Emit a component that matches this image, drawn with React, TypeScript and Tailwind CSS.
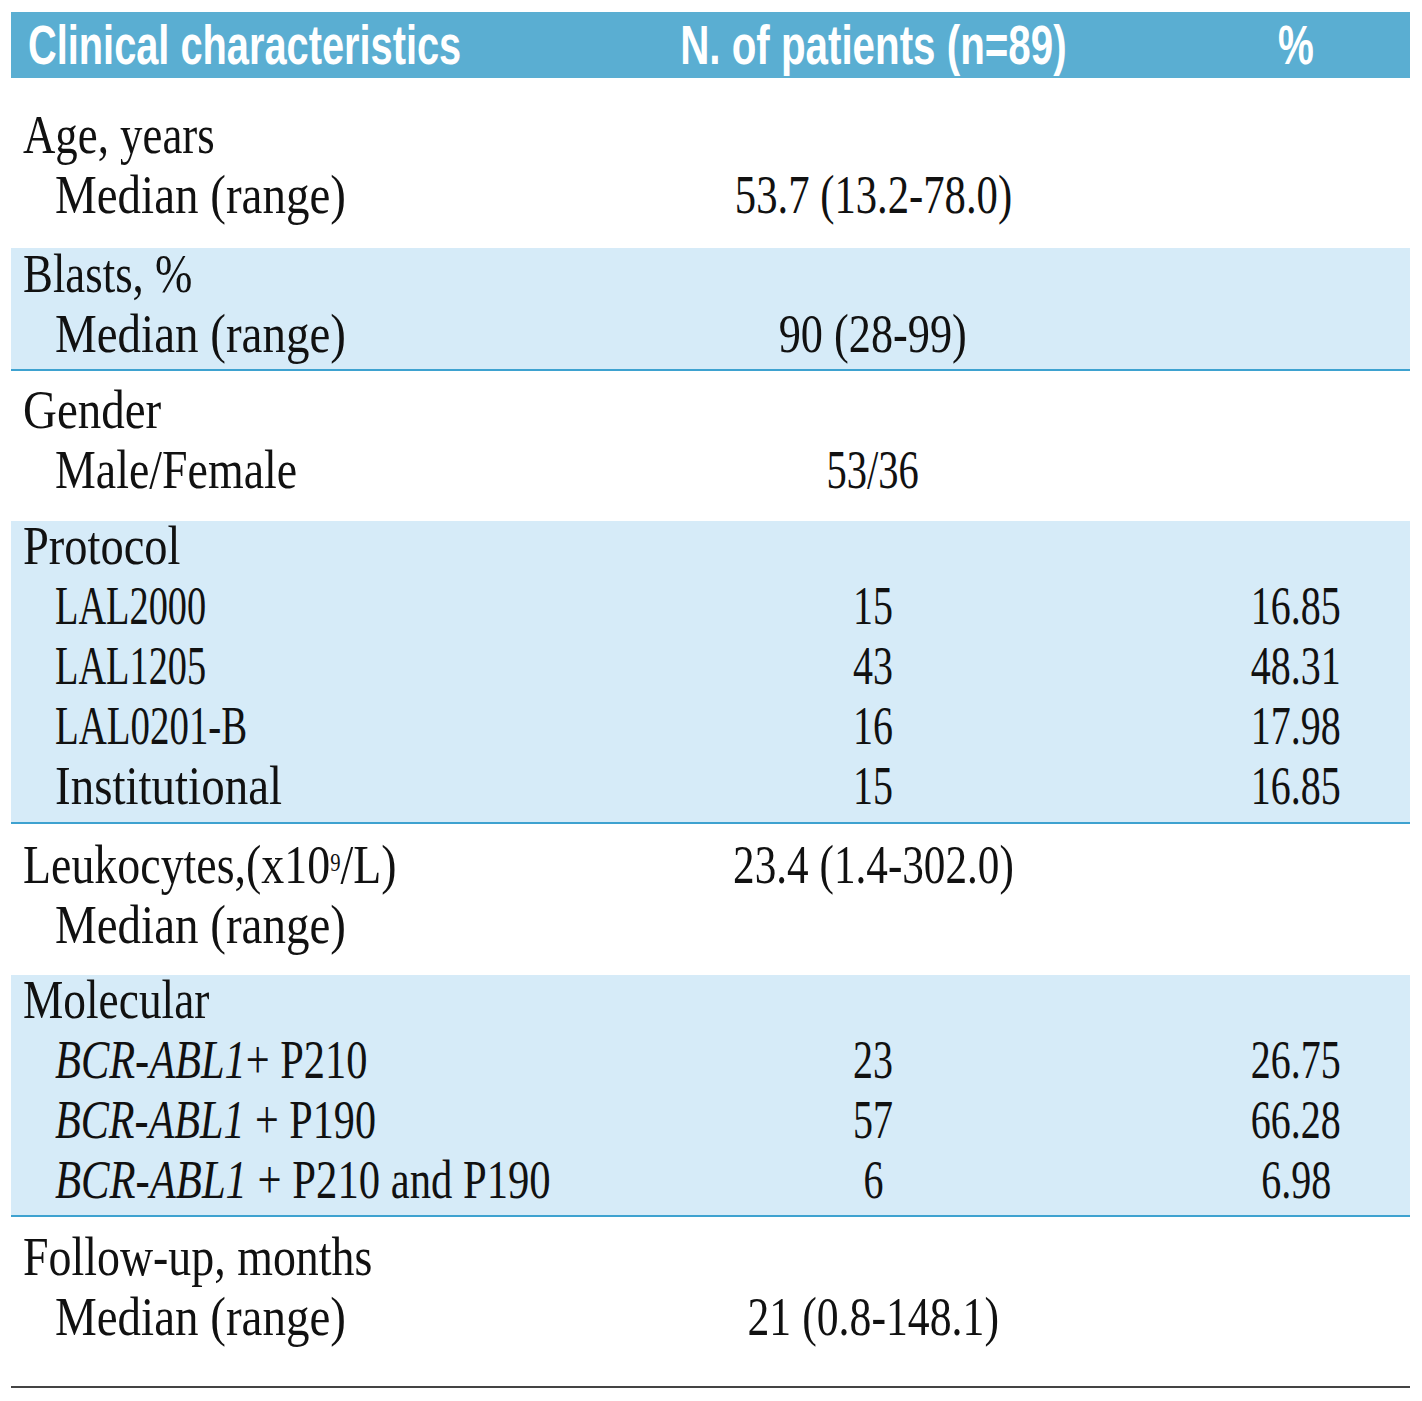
import React from "react";

type Line = {
  label?: React.ReactNode;
  labelScale?: string;
  indent?: boolean;
  n?: string;
  nScale?: string;
  pct?: string;
};

type Section = {
  blue: boolean;
  height: string;
  pad: string;
  lines: Line[];
};

const median = "Median (range)";

const sections: Section[] = [
  {
    blue: false,
    height: "h-[170px]",
    pad: "pt-[27px]",
    lines: [
      { label: "Age, years", labelScale: "scale-x-[0.83]" },
      { label: median, indent: true, n: "53.7 (13.2-78.0)", nScale: "scale-x-[0.79]" },
    ],
  },
  {
    blue: true,
    height: "h-[123px]",
    pad: "-translate-y-[4px]",
    lines: [
      { label: "Blasts, %", labelScale: "scale-x-[0.83]" },
      { label: median, indent: true, n: "90 (28-99)", nScale: "scale-x-[0.82]" },
    ],
  },
  {
    blue: false,
    height: "h-[150px]",
    pad: "pt-[9px]",
    lines: [
      { label: "Gender", labelScale: "scale-x-[0.87]" },
      { label: "Male/Female", indent: true, labelScale: "scale-x-[0.85]", n: "53/36", nScale: "scale-x-[0.75]" },
    ],
  },
  {
    blue: true,
    height: "h-[303px]",
    pad: "-translate-y-[5px]",
    lines: [
      { label: "Protocol", labelScale: "scale-x-[0.86]" },
      { label: "LAL2000", indent: true, labelScale: "scale-x-[0.71]", n: "15", pct: "16.85" },
      { label: "LAL1205", indent: true, labelScale: "scale-x-[0.71]", n: "43", pct: "48.31" },
      { label: "LAL0201-B", indent: true, labelScale: "scale-x-[0.72]", n: "16", pct: "17.98" },
      { label: "Institutional", indent: true, labelScale: "scale-x-[0.87]", n: "15", pct: "16.85" },
    ],
  },
  {
    blue: false,
    height: "h-[151px]",
    pad: "pt-[11px]",
    lines: [
      {
        label: (
          <>
            Leukocytes,(x10<sup className="text-[0.45em] relative -top-[0.5em] align-baseline">9</sup>/L)
          </>
        ),
        labelScale: "scale-x-[0.85]",
        n: "23.4 (1.4-302.0)",
        nScale: "scale-x-[0.8]",
      },
      { label: median, indent: true },
    ],
  },
  {
    blue: true,
    height: "h-[242px]",
    pad: "-translate-y-[5px]",
    lines: [
      { label: "Molecular", labelScale: "scale-x-[0.84]" },
      {
        label: (
          <>
            <i>BCR-ABL1</i>+ P210
          </>
        ),
        indent: true,
        labelScale: "scale-x-[0.785]",
        n: "23",
        pct: "26.75",
      },
      {
        label: (
          <>
            <i>BCR-ABL1</i> + P190
          </>
        ),
        indent: true,
        labelScale: "scale-x-[0.78]",
        n: "57",
        pct: "66.28",
      },
      {
        label: (
          <>
            <i>BCR-ABL1</i> + P210 and P190
          </>
        ),
        indent: true,
        labelScale: "scale-x-[0.79]",
        n: "6",
        pct: "6.98",
      },
    ],
  },
  {
    blue: false,
    height: "h-[169px]",
    pad: "pt-[10px]",
    lines: [
      { label: "Follow-up, months", labelScale: "scale-x-[0.85]" },
      { label: median, indent: true, n: "21 (0.8-148.1)", nScale: "scale-x-[0.81]" },
    ],
  },
];

const cols = "grid grid-cols-[553px_618px_228px]";

const Row = ({ line }: { line: Line }) => {
  return (
    <div className={`${cols} h-[60px] items-center`}>
      <div className={line.indent ? "pl-[44px]" : "pl-[12px]"}>
        {line.label && (
          <span
            className={`inline-block whitespace-nowrap origin-left ${line.labelScale ?? "scale-x-[0.87]"}`}
          >
            {line.label}
          </span>
        )}
      </div>
      <div className="text-center">
        {line.n && (
          <span
            className={`inline-block whitespace-nowrap origin-center ${line.nScale ?? "scale-x-[0.74]"}`}
          >
            {line.n}
          </span>
        )}
      </div>
      <div className="text-center">
        {line.pct && (
          <span className="inline-block whitespace-nowrap origin-center scale-x-[0.74]">
            {line.pct}
          </span>
        )}
      </div>
    </div>
  );
};

export default function App() {
  return (
    <div className="w-[1422px] h-[1401px] bg-white pt-[12px] pl-[11px]">
      <div className="w-[1399px]">
        {/* header bar */}
        <div
          className={`${cols} h-[66px] items-center bg-[#5aaed2] text-white font-bold text-[56px] leading-none font-['Liberation_Sans',Arial,sans-serif]`}
        >
          <div className="pl-[17px]">
            <span className="inline-block whitespace-nowrap origin-left scale-x-[0.71]">
              Clinical characteristics
            </span>
          </div>
          <div className="text-center">
            <span className="inline-block whitespace-nowrap origin-center scale-x-[0.72]">
              N. of patients (n=89)
            </span>
          </div>
          <div className="text-center">
            <span className="inline-block whitespace-nowrap origin-center scale-x-[0.72]">%</span>
          </div>
        </div>

        {/* body */}
        <div className="font-['Liberation_Serif','Times_New_Roman',serif] text-[54px] leading-[60px] text-[#111]">
          {sections.map((s, i) => (
            <div
              key={i}
              className={
                s.blue
                  ? `${s.height} bg-[#d6ebf8] border-b-2 border-[#3ea2d0]`
                  : `${s.height} bg-white`
              }
            >
              <div className={s.pad}>
                {s.lines.map((l, j) => (
                  <Row key={j} line={l} />
                ))}
              </div>
            </div>
          ))}
          <div className="h-[2px] bg-[#444]" />
        </div>
      </div>
    </div>
  );
}
